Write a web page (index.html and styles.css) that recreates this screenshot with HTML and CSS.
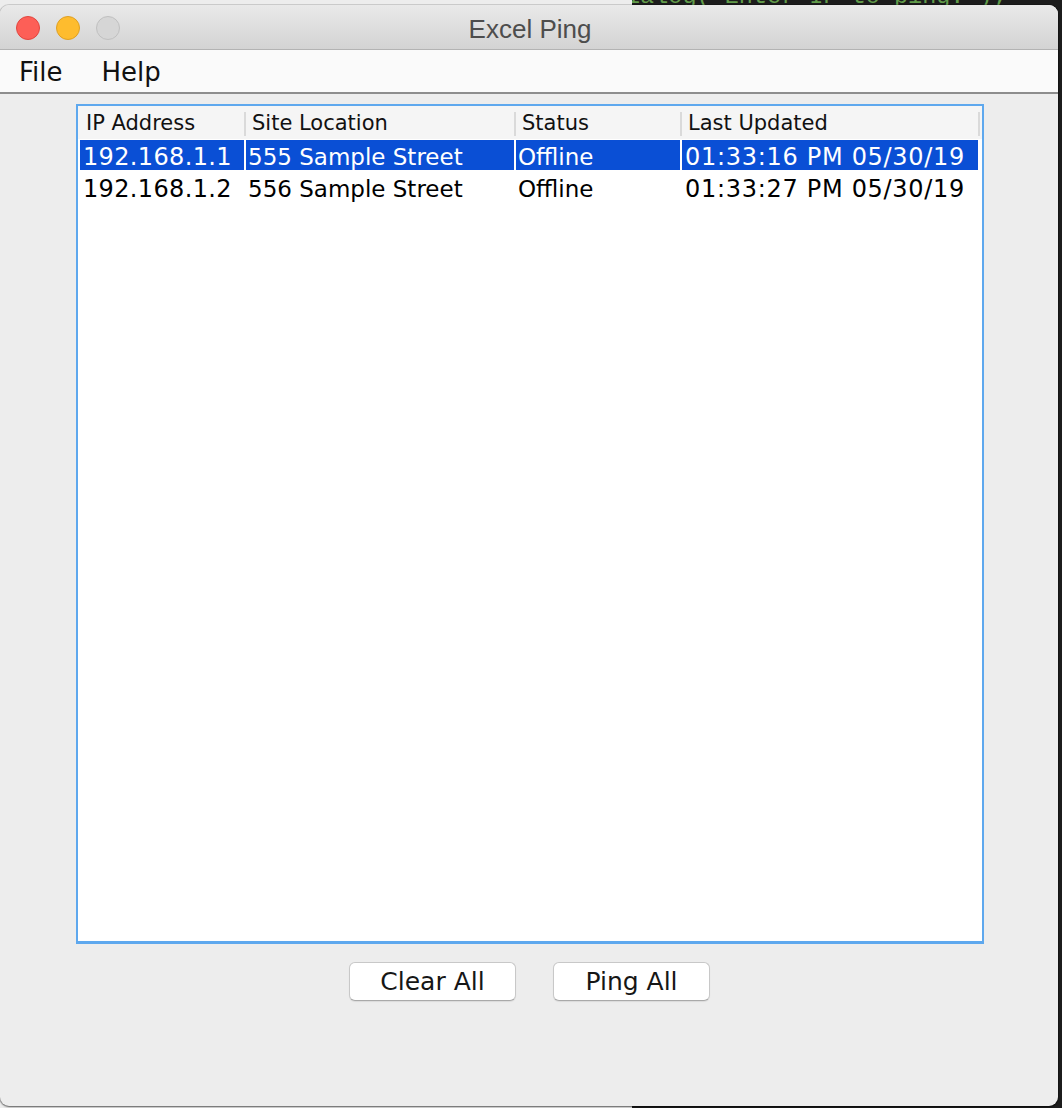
FILE: index.html
```html
<!DOCTYPE html>
<html>
<head>
<meta charset="utf-8">
<title>Excel Ping</title>
<link rel="stylesheet" href="styles.css">
</head>
<body>
<div class="terminal"><span class="code">ialog("Enter IP to ping:");</span></div>
<div class="window">
  <div class="titlebar">
    <div class="lights">
      <span class="light red"></span>
      <span class="light yellow"></span>
      <span class="light grey"></span>
    </div>
    <div class="title">Excel Ping</div>
    <div></div>
  </div>
  <div class="menubar">
    <span class="menu">File</span>
    <span class="menu">Help</span>
  </div>
  <div class="content">
    <div class="pane">
      <div class="grid header">
        <div class="hcell">IP Address</div>
        <div class="hcell">Site Location</div>
        <div class="hcell">Status</div>
        <div class="hcell">Last Updated</div>
      </div>
      <div class="grid row selected">
        <div class="cell ip">192.168.1.1</div>
        <div class="cell text">555 Sample Street</div>
        <div class="cell text">Offline</div>
        <div class="cell date">01:33:16 PM 05/30/19</div>
      </div>
      <div class="grid row">
        <div class="cell ip">192.168.1.2</div>
        <div class="cell text">556 Sample Street</div>
        <div class="cell text">Offline</div>
        <div class="cell date">01:33:27 PM 05/30/19</div>
      </div>
    </div>
    <div class="buttons">
      <button class="btn clear">Clear All</button>
      <button class="btn ping">Ping All</button>
    </div>
  </div>
</div>
</body>
</html>
```

FILE: styles.css
```css
html, body {
  margin: 0;
  padding: 0;
}
body {
  width: 1062px;
  height: 1108px;
  overflow: hidden;
  position: relative;
  background: #ededed;
  font-family: "DejaVu Sans", sans-serif;
}
.terminal {
  position: absolute;
  left: 632px;
  top: 0;
  right: 0;
  bottom: 0;
  background: #1c1c1c;
  overflow: hidden;
}
.code {
  position: absolute;
  left: -6px;
  top: -17px;
  font-family: "Liberation Mono", monospace;
  font-size: 23.5px;
  color: #619b4a;
  white-space: pre;
}
.window {
  position: relative;
  z-index: 1;
  margin-top: 5px;
  width: 1058px;
  height: 1101px;
  background: #ededed;
  border-radius: 9px;
  overflow: hidden;
  box-shadow: 0 1px 2px rgba(0,0,0,0.55), 0 0 0 1px rgba(0,0,0,0.12);
  display: flex;
  flex-direction: column;
}
.titlebar {
  height: 44px;
  background: linear-gradient(#e9e9e9, #d3d3d3);
  border-bottom: 1px solid #b3b3b3;
  display: grid;
  grid-template-columns: 1fr auto 1fr;
  align-items: center;
}
.lights {
  display: flex;
  gap: 16px;
  padding-left: 16px;
  margin-top: 1px;
}
.light {
  width: 24px;
  height: 24px;
  border-radius: 50%;
  box-sizing: border-box;
}
.red { background: #fd5f57; border: 1px solid #e2463f; }
.yellow { background: #febc2e; border: 1px solid #dfa023; }
.grey { background: #d6d6d6; border: 1px solid #c0c0c0; }
.title {
  font-family: "Liberation Sans", sans-serif;
  font-size: 26px;
  color: #4d4d4d;
  margin-left: 2px;
  padding-top: 4px;
}
.menubar {
  height: 42px;
  background: #fafafa;
  border-bottom: 2px solid #8d8d8d;
  display: flex;
  align-items: center;
  gap: 39px;
  padding-left: 19px;
  font-size: 26px;
  color: #111;
}
.menu {
  padding-top: 2px;
}
.content {
  flex: 1;
  display: flex;
  flex-direction: column;
  padding: 10px 0 0 76px;
}
.pane {
  width: 904px;
  height: 835px;
  background: #fff;
  border: 2px solid #5ea8ee;
  border-bottom-width: 3px;
  box-sizing: content-box;
  padding: 0;
}
.grid {
  display: grid;
  grid-template-columns: 164px 268px 164px 296px;
  column-gap: 2px;
  margin-left: 2px;
  width: 898px;
}
.header {
  background: #f5f5f5;
  height: 33px;
  width: 904px;
  margin-left: 0;
  padding-left: 2px;
  box-sizing: border-box;
  font-size: 21px;
  color: #111;
}
.hcell {
  position: relative;
  padding-left: 6px;
  line-height: 34px;
}
.hcell::after {
  content: "";
  position: absolute;
  right: -2px;
  top: 6px;
  bottom: 4px;
  width: 2px;
  background: #dadada;
}
.row {
  height: 32px;
  color: #000;
}
.cell {
  padding-left: 3px;
  line-height: 34px;
  margin-top: 1px;
  height: 30px;
  white-space: nowrap;
  overflow: hidden;
}
.ip {
  font-size: 24px;
  letter-spacing: 0.35px;
}
.text {
  font-size: 23px;
  padding-left: 2px;
}
.date {
  font-size: 24px;
  letter-spacing: 0.7px;
}
.selected .cell {
  background: #0a4fd5;
  color: #fff;
}
.buttons {
  display: flex;
  gap: 37px;
  margin-top: 18px;
  padding-left: 273px;
}
.btn {
  height: 39px;
  background: #fff;
  border: 1px solid #c8c8c8;
  border-bottom-color: #a9a9a9;
  border-radius: 6px;
  box-shadow: 0 1px 1px rgba(0,0,0,0.08);
  font-family: "DejaVu Sans", sans-serif;
  font-size: 25px;
  color: #161616;
  padding: 0;
}
.clear { width: 167px; }
.ping { width: 157px; }
```
